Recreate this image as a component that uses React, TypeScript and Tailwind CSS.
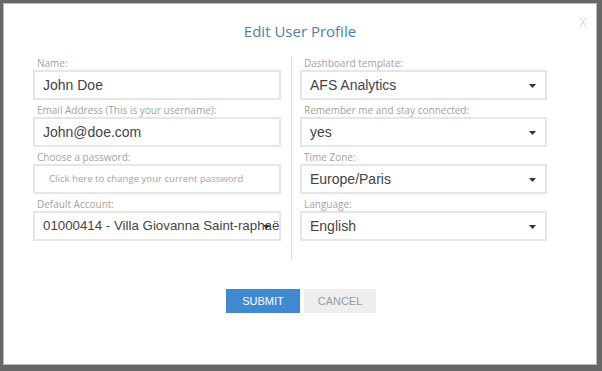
const label = "block h-[13px] pl-[4px] text-[10px] leading-[13px] text-[#a3a3a3] font-['Open_Sans',sans-serif]";
const box =
  "relative flex h-[30px] items-center border-2 border-[#e6e6e6] bg-white pl-[8px] mb-[4px] text-[14px] text-[#444] font-['Liberation_Sans',Arial,sans-serif] whitespace-nowrap overflow-hidden";

function Caret() {
  return (
    <svg className="absolute right-[9px] top-[12px]" width="7" height="4" viewBox="0 0 7 4">
      <path d="M0 0h7L3.5 4z" fill="#333" />
    </svg>
  );
}

function Field({ name, value, select, small }: { name: string; value: string; select?: boolean; small?: boolean }) {
  return (
    <div>
      <span className={label}>{name}</span>
      <div className={box}>
        <span className={small ? "text-[13.3px]" : ""}>{value}</span>
        {select && <Caret />}
      </div>
    </div>
  );
}

export default function App() {
  return (
    <div className="w-[602px] h-[371px] bg-[#686868] pt-[4px] pl-[4px] pr-[6px] pb-[7px]">
      <div className="relative h-full w-full bg-white shadow-[0_0_0_1px_#bdbdbd]">
        <span className="absolute right-[9px] top-[7px] text-[15px] font-light text-[#d0d0d0] font-['Open_Sans',sans-serif]">
          X
        </span>
        <h1 className="pt-[16px] h-[53px] text-center text-[15px] leading-[22px] text-[#4d7eae] font-['Open_Sans',sans-serif]">
          Edit User Profile
        </h1>
        <div className="flex pl-[29px]">
          <div className="w-[248px]">
            <Field name="Name:" value="John Doe" />
            <Field name="Email Address (This is your username):" value="John@doe.com" />
            <div>
              <span className={label}>Choose a password:</span>
              <div className={box + " pl-[14px]"}>
                <span className="text-[9.6px] text-[#a5a5a5] font-['Open_Sans',sans-serif]">
                  Click here to change your current password
                </span>
              </div>
            </div>
            <Field name="Default Account:" value="01000414 - Villa Giovanna Saint-raphaël" select small />
          </div>
          <div className="ml-[10px] mr-[8px] w-px h-[203px] bg-[#dcdcdc]" />
          <div className="w-[247px]">
            <Field name="Dashboard template:" value="AFS Analytics" select />
            <Field name="Remember me and stay connected:" value="yes" select />
            <Field name="Time Zone:" value="Europe/Paris" select />
            <Field name="Language:" value="English" select />
          </div>
        </div>
        <div className="mt-[29px] flex justify-center gap-[4px] pl-[2px] font-['Liberation_Sans',Arial,sans-serif]">
          <button className="h-[24px] w-[74px] bg-[#3f8ad0] text-[11px] text-white">SUBMIT</button>
          <button className="h-[24px] w-[72px] bg-[#eeeeee] text-[11px] text-[#9a9a9a]">CANCEL</button>
        </div>
      </div>
    </div>
  );
}
